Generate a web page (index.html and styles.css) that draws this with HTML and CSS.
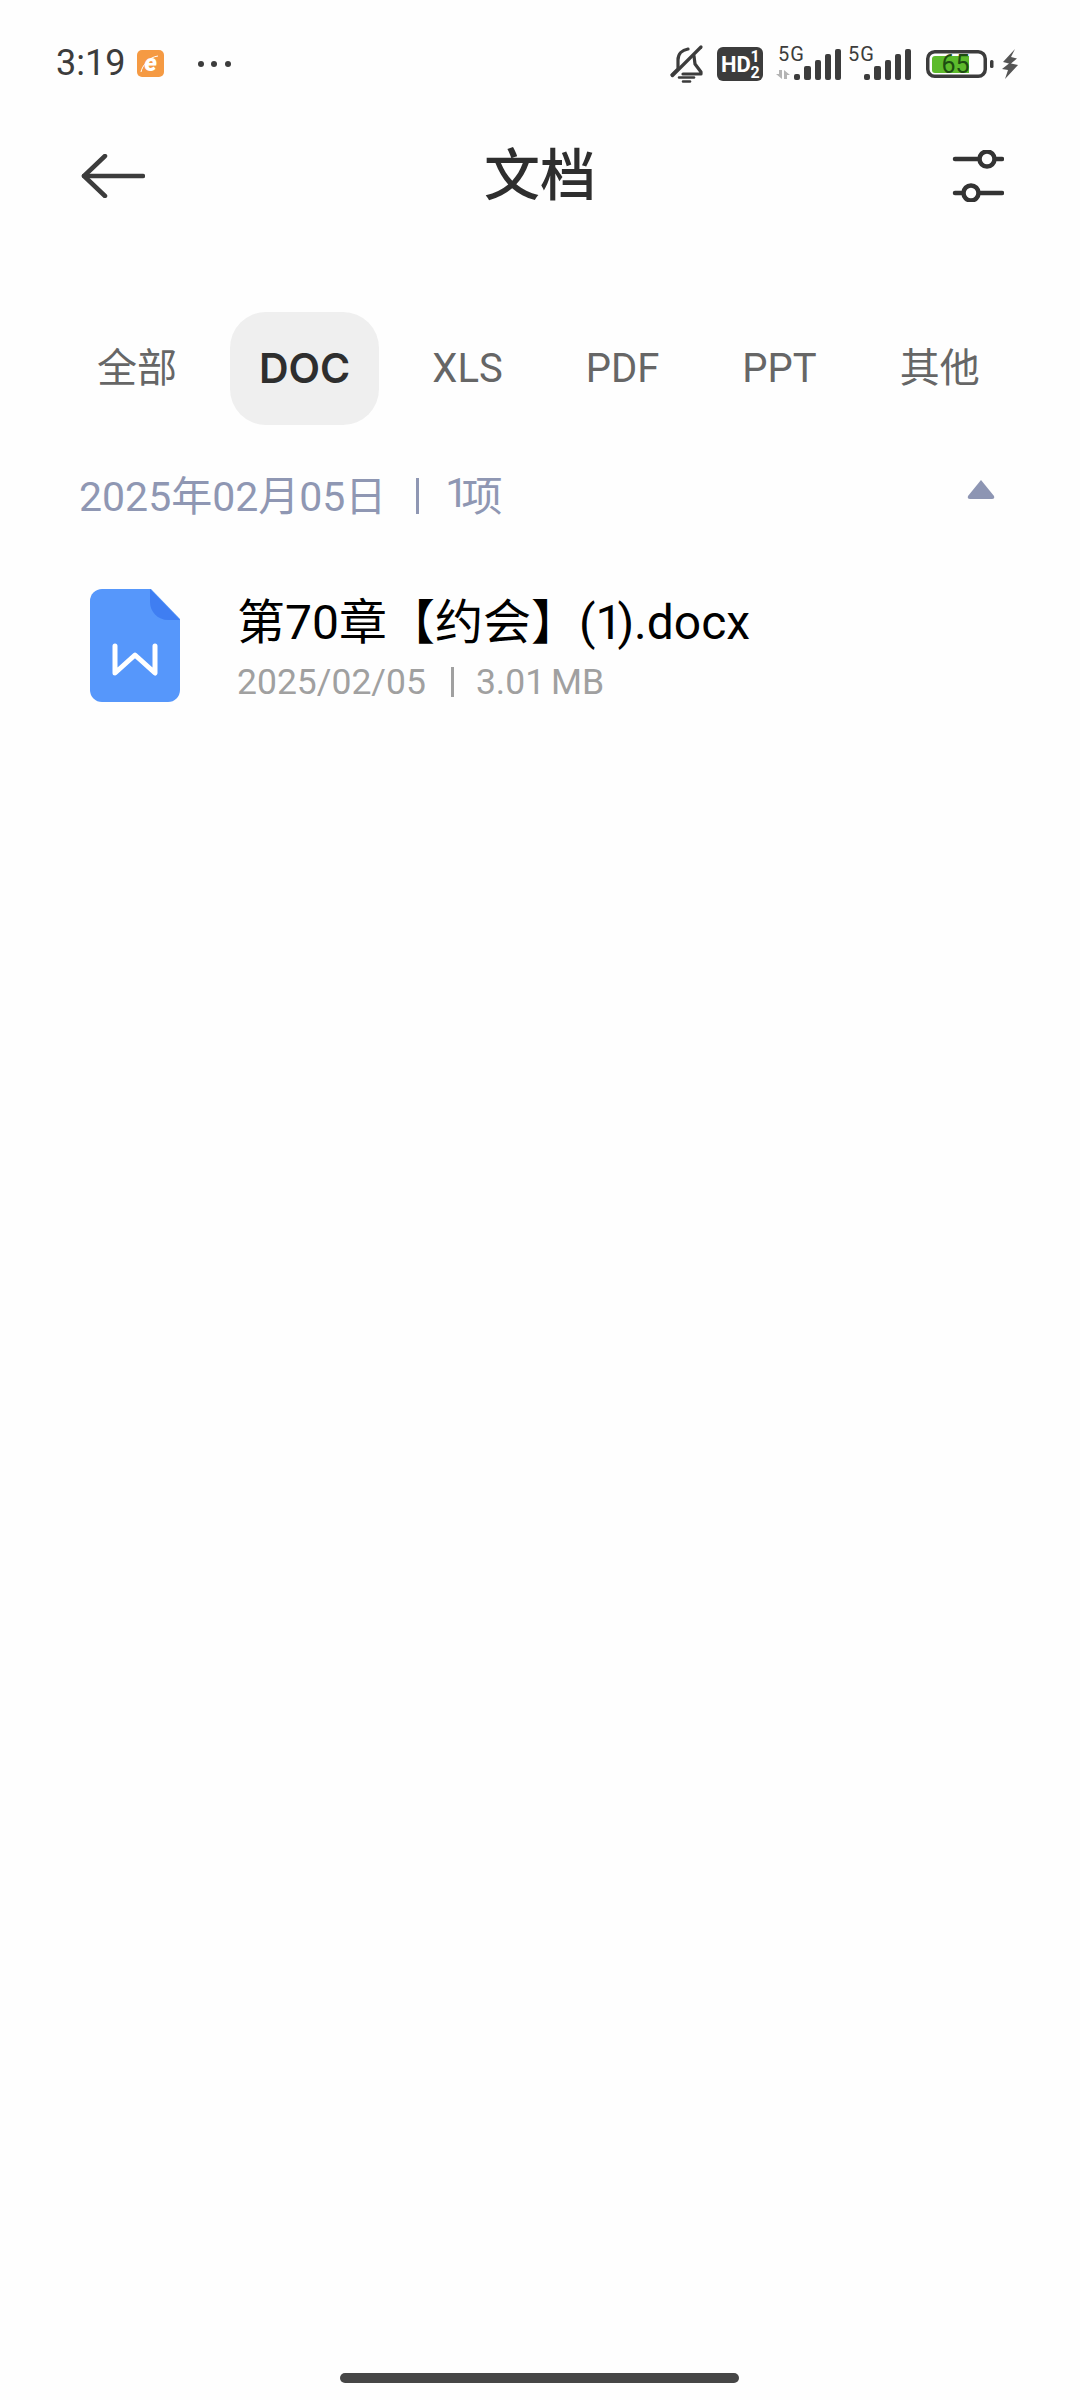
FILE: index.html
```html
<!DOCTYPE html>
<html lang="zh">
<head>
<meta charset="utf-8">
<title>文档</title>
<link rel="stylesheet" href="styles.css">
</head>
<body>
<div class="page">
  <div class="status">
    <span class="time">3:19</span>
    <svg class="app-ico" width="27" height="27" viewBox="0 0 27 27"><rect width="27" height="27" rx="5" fill="#f59a43"/><text class="e-glyph" x="13.500" y="21">e</text><path d="M4 22c1-6 8-15 17-16" fill="none" stroke="#fff" stroke-width="1"/></svg>
    <svg class="dots" width="34" height="8" viewBox="0 0 34 8"><circle cx="4" cy="4" r="3" fill="#3c3c3c"/><circle cx="17" cy="4" r="3" fill="#3c3c3c"/><circle cx="31" cy="4" r="3" fill="#3c3c3c"/></svg>
    <div class="status-right">
      <svg class="bell" width="36" height="40" viewBox="0 0 36 40" fill="none" stroke="#3c3c3c" stroke-width="3.200" stroke-linecap="round" stroke-linejoin="round"><path d="M2 31l6-6v-9c0-6 4-10 10-11"/><path d="M24 12l1 8 6 8v2H13"/><path d="M2.500 31.500L31 3"/><path d="M9 33.500h15" stroke-width="2.500"/><path d="M13 37.500h7" stroke-width="2.500"/></svg>
      <svg class="hd" width="46" height="34" viewBox="0 0 46 34"><rect width="46" height="34" rx="6" fill="#3c3c3c"/><text class="hd-big" x="4" y="24.500">HD</text><text class="hd-small" x="38" y="15">1</text><text class="hd-small" x="38" y="31">2</text></svg>
      <svg class="signal" width="70" height="45" viewBox="0 0 70 45">
        <text class="five-g" x="6" y="20">5G</text>
        <path d="M10 29v9L4 33h3v-4zM12 29l6 5h-3v4h-3z" fill="#b4b4b4"/>
        <rect class="bar" x="22" y="33" width="6" height="6" rx="2"/><rect class="bar" x="32" y="25" width="7" height="14" rx="2"/><rect class="bar" x="43" y="19" width="6" height="20" rx="2"/><rect class="bar" x="53" y="13" width="6" height="26" rx="2"/><rect class="bar" x="63" y="8" width="6" height="31" rx="2"/>
      </svg>
      <svg class="signal" width="70" height="45" viewBox="0 0 70 45">
        <text class="five-g" x="6" y="20">5G</text>
        <rect class="bar" x="22" y="33" width="6" height="6" rx="2"/><rect class="bar" x="32" y="25" width="7" height="14" rx="2"/><rect class="bar" x="43" y="19" width="6" height="20" rx="2"/><rect class="bar" x="53" y="13" width="6" height="26" rx="2"/><rect class="bar" x="63" y="8" width="6" height="31" rx="2"/>
      </svg>
      <svg class="battery" width="69" height="32" viewBox="0 0 69 32"><rect x="2.750" y="3.750" width="57.500" height="24.500" rx="7" fill="none" stroke="#3c3c3c" stroke-width="3.500"/><path d="M10 8h34v17H10a3 3 0 0 1-3-3V11a3 3 0 0 1 3-3z" fill="#5dbb2c"/><rect x="65" y="12" width="3.500" height="8" rx="1.500" fill="#3c3c3c"/><text class="bat-num" x="30.500" y="25">65</text></svg>
      <svg class="bolt" width="16" height="30" viewBox="0 0 16 30"><path d="M13 0L1 13l6 1.500L0 20l6 1-3 9 13-14-7-1.500 6-5-6-1.500z" fill="#555"/></svg>
    </div>
  </div>

  <div class="header">
    <svg class="back" width="64" height="44" viewBox="0 0 64 44" fill="none" stroke="#3c3c3c" stroke-width="4.500" stroke-linecap="round" stroke-linejoin="round"><path d="M62 22H3"/><path d="M24 2L3 22l21 20"/></svg>
    <h1 class="title">文档</h1>
    <svg class="filter" width="52" height="52" viewBox="0 0 52 52" fill="none" stroke="#333" stroke-width="4.500" stroke-linecap="round"><path d="M3 9h24M44 9h6"/><path d="M3 43h8M27 43h23"/><circle cx="35" cy="9" r="7.500"/><circle cx="19" cy="43" r="7.500"/></svg>
  </div>

  <div class="tabs">
    <span class="tab">全部</span>
    <span class="tab tab-active">DOC</span>
    <span class="tab">XLS</span>
    <span class="tab">PDF</span>
    <span class="tab">PPT</span>
    <span class="tab">其他</span>
  </div>

  <div class="section">
    <span class="section-label">2025年02月05日<i class="sep sep-section"></i><span class="tight-section">1</span>项</span>
    <svg class="caret" width="30" height="22" viewBox="0 0 30 22"><path d="M15 2L28 18q1 3-2 3H4q-3 0-2-3z" fill="#8d95b3"/></svg>
  </div>

  <div class="file">
    <svg class="doc" width="90" height="113" viewBox="0 0 90 113"><path d="M12 0h49l29 30v71a12 12 0 0 1-12 12H12a12 12 0 0 1-12-12V12A12 12 0 0 1 12 0z" fill="#5697fb"/><path d="M60 0l30 31H78c-10 0-18-8-18-18z" fill="#3f7ef2"/><path d="M25 57v27l20-18 20 18V57" fill="none" stroke="#fff" stroke-width="5" stroke-linecap="round" stroke-linejoin="round"/></svg>
    <div class="file-text">
      <div class="file-name">第70章【约会】(<span class="tight-one">1</span>).docx</div>
      <div class="file-meta">2025/02/05<i class="sep sep-meta"></i><span>3.0<span class="tight-meta">1</span> MB</span></div>
    </div>
  </div>

  <div class="home-bar"></div>
</div>
</body>
</html>
```

FILE: styles.css
```css
* { box-sizing: border-box; }
html, body { margin: 0; padding: 0; }
body { background: #fefefe; font-family: Roboto, "Noto Sans CJK SC", sans-serif; }
.page { width: 1080px; height: 2400px; display: flex; flex-direction: column; }

.status { display: flex; align-items: center; height: 45px; margin-top: 41px; padding: 0 62px 0 56px; color: #3c3c3c; }
.time { font-size: 36px; line-height: 45px; width: 81px; }
.app-ico { margin-right: 33px; }
.status-right { margin-left: auto; display: flex; align-items: center; }
.bell { margin-right: 11px; }
.hd { margin-right: 9px; }
.battery { margin-left: 13px; margin-right: 8px; }
.e-glyph { font: italic 900 24px Roboto, sans-serif; fill: #fff; text-anchor: middle; }
.hd-big { font: 700 22px Roboto, sans-serif; fill: #fff; }
.hd-small { font: 700 16px Roboto, sans-serif; fill: #fff; text-anchor: middle; }
.five-g { font: 400 20px Roboto, sans-serif; letter-spacing: 1px; fill: #3c3c3c; }
.bar { fill: #3c3c3c; }
.bat-num { font: 400 25px Roboto, sans-serif; fill: #1d4d12; text-anchor: middle; }

.header { display: grid; grid-template-columns: 1fr auto 1fr; align-items: center; height: 68px; margin-top: 56px; padding: 0 78px; }
.back { margin-left: 3px; }
.filter { justify-self: end; margin-right: -2px; }
.title { margin: 0; font-size: 56px; font-weight: 500; color: #2e2e2e; line-height: 68px; }

.tabs { display: flex; gap: 23px; margin-top: 102px; padding-left: 67px; }
.tab { height: 113px; line-height: 113px; padding: 0 30px; border-radius: 36px; font-size: 40px; color: #666; white-space: nowrap; }
.tab-active { background: #efefef; color: #2e2e2e; font-family: Inter, Roboto, sans-serif; font-size: 41px; font-weight: 600; padding: 0 29px; }

.section { display: flex; align-items: center; justify-content: space-between; height: 64px; margin-top: 36px; padding: 0 84px 0 79px; }
.section-label { font-size: 41px; color: #8f97b3; display: flex; align-items: center; }
.sep { display: inline-block; width: 3px; background: currentColor; }
.sep-section { height: 36px; margin: 6px 26px 0 30px; }
.sep-meta { height: 30px; margin: 0 22px 0 25px; }
.tight-section { letter-spacing: -7px; }
.tight-one { letter-spacing: -5px; }
.tight-meta { letter-spacing: -3px; }
.caret { margin-top: -8px; }

.file { display: flex; align-items: center; margin-top: 62.500px; padding-left: 90px; }
.doc { flex: none; }
.file-text { margin-left: 57px; padding-top: 3px; }
.file-name { font-size: 48px; line-height: 64px; color: #000; white-space: nowrap; }
.file-meta { font-size: 35.500px; line-height: 44px; margin-top: 5px; color: #a0a0a0; display: flex; align-items: center; }

.home-bar { width: 399px; height: 10px; margin: auto auto 17px 339.500px; border-radius: 5px; background: #464646; }
```
